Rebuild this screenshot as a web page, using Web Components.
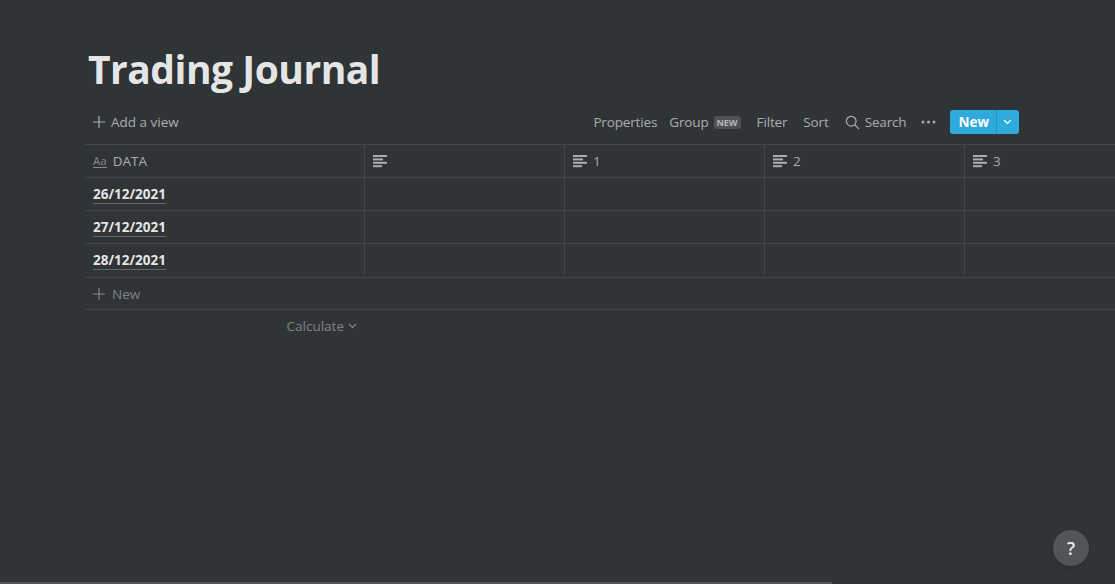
<!DOCTYPE html>
<html>
<head>
<meta charset="utf-8">
<title>Trading Journal</title>
<style>
  html, body { margin: 0; height: 100%; overflow: hidden; background: #2f3437; }
  body { font-family: "Open Sans", "Noto Sans", "Liberation Sans", sans-serif; color: rgba(255,255,255,0.9); }
</style>
</head>
<body>
<journal-page>
  <journal-toolbar slot="toolbar"></journal-toolbar>
  <journal-table slot="table"></journal-table>
</journal-page>
<help-button></help-button>
<page-scrollbar></page-scrollbar>

<script>
const ICONS = {
  plus: '<svg width="14" height="14" viewBox="0 0 14 14"><path d="M7 1v12M1 7h12" stroke="currentColor" stroke-width="1.2" fill="none"/></svg>',
  lines: '<svg width="14" height="14" viewBox="0 0 14 14" fill="currentColor"><rect y="1" width="14" height="2"/><rect y="4.4" width="10" height="2"/><rect y="7.8" width="14" height="2"/><rect y="11.2" width="9" height="2"/></svg>',
  search: '<svg width="15" height="15" viewBox="0 0 15 15" fill="none" stroke="currentColor" stroke-width="1.2"><circle cx="6.2" cy="6.2" r="4.9"/><path d="M9.8 9.8l4.4 4.4"/></svg>',
  dots: '<svg width="15" height="4" viewBox="0 0 15 4" fill="currentColor"><circle cx="2" cy="2" r="1.5"/><circle cx="7.5" cy="2" r="1.5"/><circle cx="13" cy="2" r="1.5"/></svg>',
  chevron: '<svg width="9" height="6" viewBox="0 0 9 6" fill="none" stroke="currentColor" stroke-width="1.2"><path d="M1 1l3.5 3.5L8 1"/></svg>'
};

class JournalPage extends HTMLElement {
  constructor() {
    super();
    this.attachShadow({ mode: "open" });
    this.shadowRoot.innerHTML = `
      <style>
        :host { display: block; padding: 44px 0 0 85px; width: 1300px; }
        h1 { margin: 0 0 0 3px; font-size: 39px; line-height: 50px; font-weight: 700; color: rgba(255,255,255,0.9); letter-spacing: -0.5px; }
      </style>
      <h1>Trading Journal</h1>
      <slot name="toolbar"></slot>
      <slot name="table"></slot>
    `;
  }
}

class JournalToolbar extends HTMLElement {
  constructor() {
    super();
    this.attachShadow({ mode: "open" });
    this.shadowRoot.innerHTML = `
      <style>
        :host { display: flex; align-items: center; justify-content: space-between; box-sizing: border-box; width: 934px; height: 50px; padding: 6px 0 0 7px; font-size: 13.5px; color: rgba(255,255,255,0.6); }
        .left, .right { display: flex; align-items: center; }
        .left svg { margin-right: 5px; }
        .right { letter-spacing: -0.15px; }
        .right span.item { margin-left: 12px; }
        .tag { margin-left: 5px; margin-right: 4px; padding: 0 3px; height: 13px; line-height: 13px; font-size: 9px; font-weight: 700; letter-spacing: 0; color: rgba(255,255,255,0.6); background: rgba(255,255,255,0.15); border-radius: 3px; }
        .search { display: flex; align-items: center; gap: 5px; margin-left: 16px; }
        .dots { display: flex; margin: 0 14px 0 15px; }
        .btn { display: flex; height: 24px; border-radius: 3px; overflow: hidden; background: #2eaadc; color: #fff; font-weight: 700; letter-spacing: 0; }
        .btn b { display: block; font-weight: 700; line-height: 24px; padding: 0 7px 0 8px; margin-right: -1px; border-right: 1px solid rgba(0,0,0,0.12); }
        .btn i { display: flex; align-items: center; justify-content: center; width: 23px; }
      </style>
      <div class="left">${ICONS.plus}<span>Add a view</span></div>
      <div class="right">
        <span class="item">Properties</span>
        <span class="item">Group</span><span class="tag">NEW</span>
        <span class="item">Filter</span>
        <span class="item" style="margin-left:16px">Sort</span>
        <div class="search">${ICONS.search}<span>Search</span></div>
        <div class="dots">${ICONS.dots}</div>
        <div class="btn"><b>New</b><i>${ICONS.chevron}</i></div>
      </div>
    `;
  }
}

class JournalTable extends HTMLElement {
  constructor() {
    super();
    this.attachShadow({ mode: "open" });
    const heads = ["", "1", "2", "3"];
    const rows = ["26/12/2021", "27/12/2021", "28/12/2021"];
    const emptyCells = heads.map(() => '<div class="cell"></div>').join("");
    this.shadowRoot.innerHTML = `
      <style>
        :host { display: block; width: 1030px; font-size: 13.5px; }
        .row { display: grid; grid-template-columns: 279px repeat(4, 200px); height: 33px; box-sizing: border-box; border-top: 1px solid rgba(255,255,255,0.09); }
        .cell { border-left: 1px solid rgba(255,255,255,0.09); }
        .cell:first-child { border-left: 0; }
        .head .cell { display: flex; align-items: center; gap: 6px; padding-left: 8px; color: rgba(255,255,255,0.6); }
        .head .cell:first-child { padding-left: 8px; gap: 6px; }
        .aa { font-size: 11.5px; line-height: 13px; border-bottom: 1px solid currentColor; opacity: .7; }
        .title { display: flex; align-items: center; box-sizing: border-box; height: 32px; padding: 2px 0 0 8px; font-weight: 700; color: rgba(255,255,255,0.9); }
        .title span { line-height: 17px; border-bottom: 1px solid rgba(255,255,255,0.25); }
        .rows .row:last-child { height: 34px; }
        .rows .row:last-child .cell:not(.title) { height: 30px; }
        .new { display: flex; align-items: center; gap: 6px; height: 32px; box-sizing: border-box; padding-left: 7px; color: rgba(255,255,255,0.4); border-top: 1px solid rgba(255,255,255,0.09); }
        .calc { display: flex; align-items: center; justify-content: flex-end; gap: 4px; box-sizing: border-box; padding-right: 758px; height: 33px; border-top: 1px solid rgba(255,255,255,0.09); color: rgba(255,255,255,0.4); }
      </style>
      <div class="row head">
        <div class="cell"><span class="aa">Aa</span><span>DATA</span></div>
        ${heads.map(h => `<div class="cell">${ICONS.lines}<span>${h}</span></div>`).join("")}
      </div>
      <div class="rows">
        ${rows.map(r => `<div class="row"><div class="cell title"><span>${r}</span></div>${emptyCells}</div>`).join("")}
      </div>
      <div class="new">${ICONS.plus}<span>New</span></div>
      <div class="calc"><span>Calculate</span>${ICONS.chevron}</div>
    `;
  }
}

class HelpButton extends HTMLElement {
  constructor() {
    super();
    this.attachShadow({ mode: "open" });
    this.shadowRoot.innerHTML = `
      <style>
        :host { position: fixed; left: 1053px; top: 530px; width: 36px; height: 36px; border-radius: 50%; display: flex; align-items: center; justify-content: center; background: #505558; color: rgba(255,255,255,0.9); font-size: 18px; font-weight: 600; box-shadow: 0 0 0 1px rgba(15,15,15,0.05), 0 2px 4px rgba(15,15,15,0.1); }
      </style>
      <span>?</span>
    `;
  }
}

class PageScrollbar extends HTMLElement {
  constructor() {
    super();
    this.attachShadow({ mode: "open" });
    this.shadowRoot.innerHTML = `
      <style>
        :host { position: fixed; left: 0; bottom: 0; width: 832px; height: 2px; background: #505558; }
      </style>
    `;
  }
}

customElements.define("journal-page", JournalPage);
customElements.define("journal-toolbar", JournalToolbar);
customElements.define("journal-table", JournalTable);
customElements.define("help-button", HelpButton);
customElements.define("page-scrollbar", PageScrollbar);
</script>
</body>
</html>
